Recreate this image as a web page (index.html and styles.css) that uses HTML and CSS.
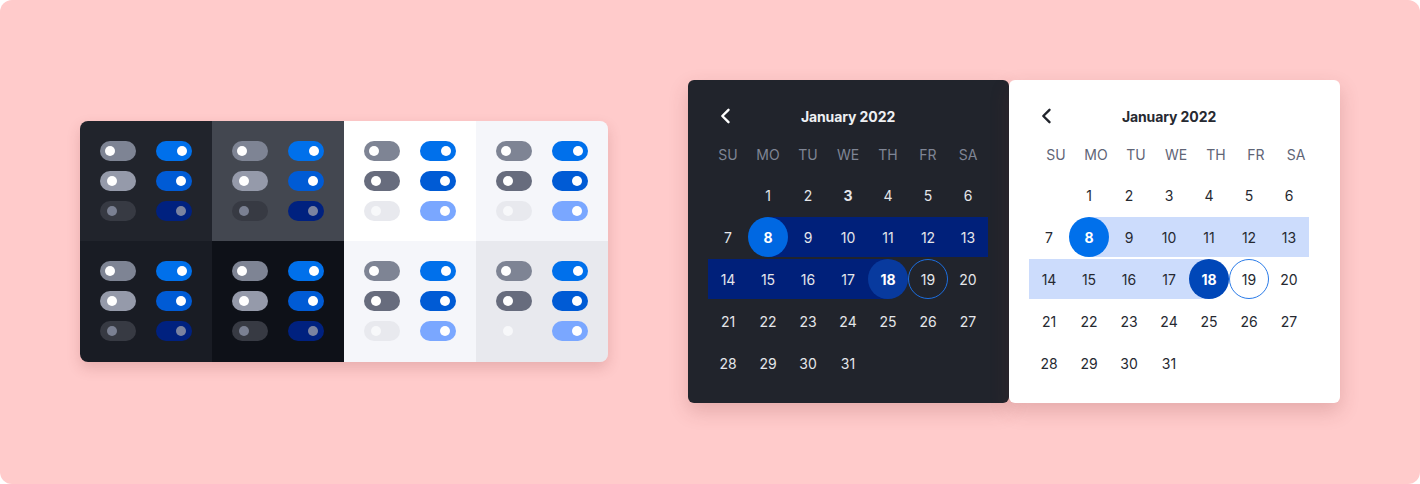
FILE: index.html
```html
<!DOCTYPE html>
<html>
<head>
<meta charset="utf-8">
<link rel="stylesheet" href="styles.css">
</head>
<body>
<div class="stage">
  <div class="toggles">
    <div class="cell dark c1">
      <span class="tg off"></span><span class="tg on"></span>
      <span class="tg off hv"></span><span class="tg on hv"></span>
      <span class="tg off dis"></span><span class="tg on dis"></span>
    </div>
    <div class="cell dark c2">
      <span class="tg off"></span><span class="tg on"></span>
      <span class="tg off hv"></span><span class="tg on hv"></span>
      <span class="tg off dis"></span><span class="tg on dis"></span>
    </div>
    <div class="cell light c3">
      <span class="tg off"></span><span class="tg on"></span>
      <span class="tg off hv"></span><span class="tg on hv"></span>
      <span class="tg off dis"></span><span class="tg on dis"></span>
    </div>
    <div class="cell light c4">
      <span class="tg off"></span><span class="tg on"></span>
      <span class="tg off hv"></span><span class="tg on hv"></span>
      <span class="tg off dis"></span><span class="tg on dis"></span>
    </div>
    <div class="cell dark c5">
      <span class="tg off"></span><span class="tg on"></span>
      <span class="tg off hv"></span><span class="tg on hv"></span>
      <span class="tg off dis"></span><span class="tg on dis"></span>
    </div>
    <div class="cell dark c6">
      <span class="tg off"></span><span class="tg on"></span>
      <span class="tg off hv"></span><span class="tg on hv"></span>
      <span class="tg off dis"></span><span class="tg on dis"></span>
    </div>
    <div class="cell light c7">
      <span class="tg off"></span><span class="tg on"></span>
      <span class="tg off hv"></span><span class="tg on hv"></span>
      <span class="tg off dis"></span><span class="tg on dis"></span>
    </div>
    <div class="cell light c8">
      <span class="tg off"></span><span class="tg on"></span>
      <span class="tg off hv"></span><span class="tg on hv"></span>
      <span class="tg off dis"></span><span class="tg on dis"></span>
    </div>
  </div>

  <div class="cals">
    <div class="cal cal-dark">
      <div class="cal-head">
        <svg class="chev" width="12" height="16" viewBox="0 0 12 16"><path d="M9.5 1.8 L3.3 8 L9.5 14.2" fill="none" stroke="currentColor" stroke-width="2.4" stroke-linecap="round" stroke-linejoin="round"/></svg>
        <div class="title">January 2022</div>
      </div>
      <div class="wk"><span>SU</span><span>MO</span><span>TU</span><span>WE</span><span>TH</span><span>FR</span><span>SA</span></div>
      <div class="days">
        <span></span><span>1</span><span>2</span><span class="today">3</span><span>4</span><span>5</span><span>6</span>
        <span>7</span><span class="rs"><b class="dot d-start">8</b></span><span class="rg">9</span><span class="rg">10</span><span class="rg">11</span><span class="rg">12</span><span class="rg">13</span>
        <span class="rg">14</span><span class="rg">15</span><span class="rg">16</span><span class="rg">17</span><span class="re"><b class="dot d-end">18</b></span><span><i class="ring">19</i></span><span>20</span>
        <span>21</span><span>22</span><span>23</span><span>24</span><span>25</span><span>26</span><span>27</span>
        <span>28</span><span>29</span><span>30</span><span>31</span><span></span><span></span><span></span>
      </div>
    </div>
    <div class="cal cal-light">
      <div class="cal-head">
        <svg class="chev" width="12" height="16" viewBox="0 0 12 16"><path d="M9.5 1.8 L3.3 8 L9.5 14.2" fill="none" stroke="currentColor" stroke-width="2.4" stroke-linecap="round" stroke-linejoin="round"/></svg>
        <div class="title">January 2022</div>
      </div>
      <div class="wk"><span>SU</span><span>MO</span><span>TU</span><span>WE</span><span>TH</span><span>FR</span><span>SA</span></div>
      <div class="days">
        <span></span><span>1</span><span>2</span><span>3</span><span>4</span><span>5</span><span>6</span>
        <span>7</span><span class="rs"><b class="dot d-start">8</b></span><span class="rg">9</span><span class="rg">10</span><span class="rg">11</span><span class="rg">12</span><span class="rg">13</span>
        <span class="rg">14</span><span class="rg">15</span><span class="rg">16</span><span class="rg">17</span><span class="re"><b class="dot d-end">18</b></span><span><i class="ring">19</i></span><span>20</span>
        <span>21</span><span>22</span><span>23</span><span>24</span><span>25</span><span>26</span><span>27</span>
        <span>28</span><span>29</span><span>30</span><span>31</span><span></span><span></span><span></span>
      </div>
    </div>
  </div>
</div>
</body>
</html>
```

FILE: styles.css
```css
* { box-sizing: border-box; }
html, body { margin: 0; padding: 0; background: #ffffff; }
body { font-family: Inter, "Noto Sans", sans-serif; }

.stage {
  width: 1420px;
  height: 484px;
  background: #ffcbcb;
  border-radius: 12px;
  display: flex;
  align-items: flex-start;
  padding-left: 80px;
  padding-top: 80px;
  gap: 80px;
}

/* Toggle panel */
.toggles {
  margin-top: 41px;
  display: grid;
  grid-template-columns: repeat(4, 132px);
  grid-template-rows: 120px 121px;
  border-radius: 8px;
  overflow: hidden;
  box-shadow: 0 6px 14px rgba(120, 40, 40, 0.18);
}
.cell {
  display: grid;
  grid-template-columns: 36px 36px;
  grid-auto-rows: 20px;
  column-gap: 20px;
  row-gap: 10px;
  padding: 20px;
  align-content: start;
}
.c1 { background: #21242c; }
.c2 { background: #434750; }
.c3 { background: #ffffff; }
.c4 { background: #f5f6fa; }
.c5 { background: #191c24; }
.c6 { background: #0e1118; }
.c7 { background: #f5f6fa; }
.c8 { background: #e8e9ee; }

.tg {
  position: relative;
  display: block;
  width: 36px;
  height: 20px;
  border-radius: 10px;
}
.tg::after {
  content: "";
  position: absolute;
  top: 5px;
  width: 10px;
  height: 10px;
  border-radius: 50%;
  background: #ffffff;
}
.tg.off::after { left: 5px; }
.tg.on::after { right: 5px; }
.tg.off.hv::after, .tg.off.dis::after { left: 6.5px; }
.tg.on.hv::after, .tg.on.dis::after { right: 6.5px; }

.tg.off { background: #7e8494; }
.tg.on { background: #0070eb; }
.tg.on.hv { background: #005bd5; }

.dark .tg.off.hv { background: #959aaa; }
.dark .tg.off.dis { background: #373a43; }
.dark .tg.off.dis::after { background: #7a8092; }
.dark .tg.on.dis { background: #00217f; }
.dark .tg.on.dis::after { background: #7b83a0; }

.light .tg.off.hv { background: #676c7d; }
.light .tg.off.dis { background: #e8e9ee; }
.light .tg.off.dis::after { background: #f7f8fa; }
.light .tg.on.dis { background: #7aa7ff; }

/* Calendars */
.cals { display: flex; }
.cal {
  border-radius: 6px;
  padding: 16px 20px 20px 20px;
  box-shadow: 0 8px 20px rgba(120, 40, 40, 0.2);
}
.cal-dark { width: 321px; padding-right: 21px; background: #21242c; color: #e4e6ea; }
.cal-light { width: 331px; padding-right: 31px; background: #ffffff; color: #262931; }

.cal-head {
  display: grid;
  grid-template-columns: 40px 1fr 40px;
  align-items: center;
  height: 40px;
}
.chev { margin-left: 11px; display: block; }
.cal-dark .chev { color: #ffffff; }
.cal-light .chev { color: #21242c; }
.title {
  text-align: center;
  font-size: 14px;
  font-weight: 700;
  letter-spacing: -0.1px;
}
.cal-dark .title { color: #eef0f3; }

.wk {
  display: grid;
  grid-template-columns: repeat(7, 40px);
  height: 36px;
  align-items: center;
  font-size: 14px;
}
.wk span { text-align: center; }
.cal-dark .wk { color: #7f8595; }
.cal-light .wk { color: #5f6576; padding-left: 7px; }

.days {
  margin-top: 3px;
  display: grid;
  grid-template-columns: repeat(7, 40px);
  grid-auto-rows: 40px;
  row-gap: 2px;
  font-size: 14px;
}
.days span {
  display: flex;
  align-items: center;
  justify-content: center;
}
.days .today { font-weight: 700; }

.dot, .ring {
  display: flex;
  align-items: center;
  justify-content: center;
  width: 40px;
  height: 40px;
  border-radius: 50%;
  font-style: normal;
}
.dot { font-weight: 700; color: #ffffff; }
.ring { font-weight: 400; }

.cal-dark .rg { background: #00207a; }
.cal-dark .rs { background: linear-gradient(to right, transparent 50%, #00207a 50%); }
.cal-dark .re { background: linear-gradient(to right, #00207a 50%, transparent 50%); }
.cal-dark .d-start { background: #0068e2; }
.cal-dark .d-end { background: #083a9e; }
.cal-dark .ring { border: 1px solid #1c6ee0; }

.cal-light .rg { background: #ccdcfc; }
.cal-light .rs { background: linear-gradient(to right, transparent 50%, #ccdcfc 50%); }
.cal-light .re { background: linear-gradient(to right, #ccdcfc 50%, transparent 50%); }
.cal-light .d-start { background: #0070eb; }
.cal-light .d-end { background: #0047b8; }
.cal-light .ring { border: 1px solid #2a7be8; background: #ffffff; }
```
